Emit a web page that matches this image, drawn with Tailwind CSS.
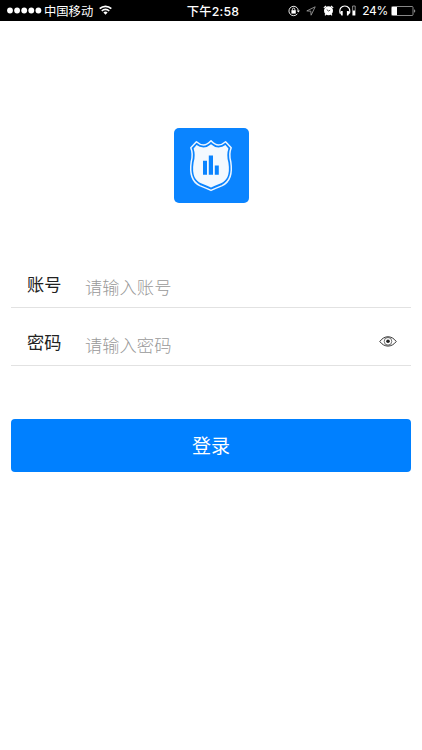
<!DOCTYPE html>
<html lang="zh-CN">
<head>
    <meta charset="UTF-8">
    <meta name="viewport" content="width=device-width, initial-scale=1.0">
    <title>登录</title>
    <!-- Tailwind CSS -->
    <script src="https://cdn.jsdelivr.net/npm/@tailwindcss/browser@4"></script>
</head>
<body class="bg-white min-h-screen overflow-hidden font-['Inter','Noto_Sans_CJK_SC',sans-serif]">

    <!-- Barra de estado -->
    <header class="h-[21px] bg-black text-white grid grid-cols-[1fr_auto_1fr] items-center text-xs leading-none whitespace-nowrap">
        <div class="flex items-center pl-[7px]">
            <svg class="w-[35px] h-[7px]" viewBox="0 0 35 7" fill="currentColor">
                <circle cx="3" cy="3.5" r="2.9"/>
                <circle cx="10.1" cy="3.5" r="2.9"/>
                <circle cx="17.2" cy="3.5" r="2.9"/>
                <circle cx="24.3" cy="3.5" r="2.9"/>
                <circle cx="31.4" cy="3.5" r="2.9"/>
            </svg>
            <span class="ml-0.5 pt-[3px] text-[12.3px]">中国移动</span>
            <svg class="ml-1.5 w-[13px] h-[10px]" viewBox="0 0 13 10" fill="none" stroke="currentColor" stroke-width="1.7">
                <path d="M.7 3.7a8.2 8.2 0 0 1 11.6 0"/>
                <path d="M2.8 6a5.2 5.2 0 0 1 7.4 0"/>
                <path d="M6.5 9.8 4.4 7.6a3 3 0 0 1 4.2 0z" fill="currentColor" stroke="none"/>
            </svg>
        </div>
        <div class="font-medium text-[12.3px] tracking-[0.2px] pl-1 pt-[3px]">下午2:58</div>
        <div class="flex items-center justify-end pr-[6px]">
            <!-- bloqueo de rotación -->
            <svg class="w-[12px] h-[12px]" viewBox="0 0 12 12" fill="none" stroke="currentColor">
                <path d="M9.4 8.8A4.7 4.7 0 1 1 10.3 5.4" stroke-width=".9"/>
                <path d="M8.7 5.4h3.2l-1.6 2z" fill="currentColor" stroke="none"/>
                <path d="M3.4 5.2h4.4v3.4H3.4z" fill="currentColor" stroke="none"/>
                <path d="M4.4 5.5V4.3a1.2 1.2 0 0 1 2.4 0v1.2" stroke-width=".9"/>
            </svg>
            <!-- ubicación -->
            <svg class="ml-[6px] w-[10px] h-[10px] text-[#999]" viewBox="0 0 10 10" fill="none" stroke="currentColor" stroke-width=".9">
                <path d="M9.2.8.8 4.9l4 .3.3 4z"/>
            </svg>
            <!-- alarma -->
            <svg class="ml-[7px] w-[11px] h-[11px]" viewBox="0 0 11 11" fill="none" stroke="currentColor">
                <circle cx="5.5" cy="5.8" r="4.5" fill="currentColor" stroke="none"/>
                <path d="M.8 2.9 3 1M10.2 2.9 8 1M2.9 9.2 2 10.4M8.1 9.2l.9 1.2" stroke-width="1.1"/>
                <path d="M3.7 4.5 5.5 6l1.7-.9" stroke="#000" stroke-width=".7"/>
            </svg>
            <!-- auriculares -->
            <svg class="ml-[5px] w-[17px] h-[11px]" viewBox="0 0 17 11" fill="none" stroke="currentColor">
                <path d="M1.2 8.5C-.2 3.5 2.6 1 5.8 1s6 2.5 4.6 7.5" stroke-width="1.2"/>
                <path d="M2 6h1.7v4.5H2.4L1.1 8zM9.6 6H7.9v4.5h1.3L10.5 8z" fill="currentColor" stroke="none"/>
                <path d="M13.6 1h2.6v9.3h-2.6z" stroke-width=".8" stroke="#aaa"/>
                <path d="M13.8 5.5h2.2v4.6h-2.2z" fill="currentColor" stroke="none"/>
            </svg>
            <span class="ml-[6px] pt-px text-xs leading-[14px] -tracking-[0.3px]">24%</span>
            <!-- batería -->
            <svg class="ml-[3px] w-[25px] h-[10px]" viewBox="0 0 25 10" fill="none">
                <rect x=".5" y=".5" width="21.5" height="9" rx="1" stroke="#aaa" stroke-width=".8"/>
                <rect x="1" y="1" width="5" height="8" fill="#fff"/>
                <path d="M23.2 3.3c1.4.5 1.4 2.9 0 3.4z" fill="#aaa"/>
            </svg>
        </div>
    </header>

    <main class="px-[11px] pt-[106.5px]">
        <!-- Logo -->
        <div class="mx-auto w-[75px] h-[75.5px] rounded-[5px] bg-[#0a84ff]">
            <svg class="w-[75px] h-[75px]" viewBox="0 0 75 75">
                <path d="M37 12.8Q33 17 29.5 17T22.4 13.8L16.8 19.8Q19.4 26 17.2 34C15 48.5 19.5 54.5 25.8 57.6Q33 60.5 37 62.4Q41 60.5 48.2 57.6C54.5 54.5 59 48.5 56.8 34Q54.6 26 57.2 19.8L51.6 13.8Q48 17 44.5 17T37 12.8Z" fill="#0a84ff" stroke="#eef6ff" stroke-width="1.5" stroke-linejoin="round"/>
                <path d="M37 16.2Q33.5 19.4 29.5 19.4T22.6 17L19.6 20.4Q21.8 27 19.6 34.4C17.6 47.5 21.6 52.7 27 55.2Q33.5 57.8 37 59.5Q40.5 57.8 47 55.2C52.4 52.7 56.4 47.5 54.4 34.4Q52.2 27 54.4 20.4L51.4 17Q48.5 19.4 44.5 19.4T37 16.2Z" fill="#f3f9ff"/>
                <path d="M29 32.7h4v14.1h-4zM34.8 27.5h4.2v19.3h-4.2zM40.8 37.4h4v9.4h-4z" fill="#0a84ff"/>
            </svg>
        </div>

        <!-- Formulario de acceso -->
        <form class="mt-[47px]">
            <div class="h-[58px] flex items-center border-b border-[#e2e2e2] pl-4">
                <label for="cuenta" class="w-[58px] pt-[13px] text-[17.2px] leading-6 text-[#222]">账号</label>
                <input id="cuenta" type="text" placeholder="请输入账号" class="flex-1 min-w-0 pt-[18px] text-[17.3px] leading-6 font-light outline-none placeholder:text-[#999]">
            </div>
            <div class="h-[58px] flex items-center border-b border-[#e2e2e2] pl-4 pr-[14px]">
                <label for="clave" class="w-[58px] pt-[13px] text-[17.2px] leading-6 text-[#222]">密码</label>
                <input id="clave" type="password" placeholder="请输入密码" class="flex-1 min-w-0 pt-[18px] text-[17.3px] leading-6 font-light outline-none placeholder:text-[#999]">
                <svg class="mt-[10px] w-[18px] h-[11px]" viewBox="0 0 18 11" fill="none" stroke="#333">
                    <path d="M.8 5.5C5.2-.8 12.8-.8 17.2 5.5 12.8 11.6 5.2 11.6.8 5.5z" stroke-width="1"/>
                    <circle cx="9" cy="5.3" r="3.8" stroke-width=".7"/>
                    <circle cx="9" cy="5.3" r="1.8" fill="#222" stroke="none"/>
                </svg>
            </div>
            <button type="button" class="mt-[53px] block w-full h-[53px] pt-[2px] rounded-[4px] bg-[#0080ff] text-white text-[19px] leading-none">登录</button>
        </form>
    </main>

</body>
</html>
